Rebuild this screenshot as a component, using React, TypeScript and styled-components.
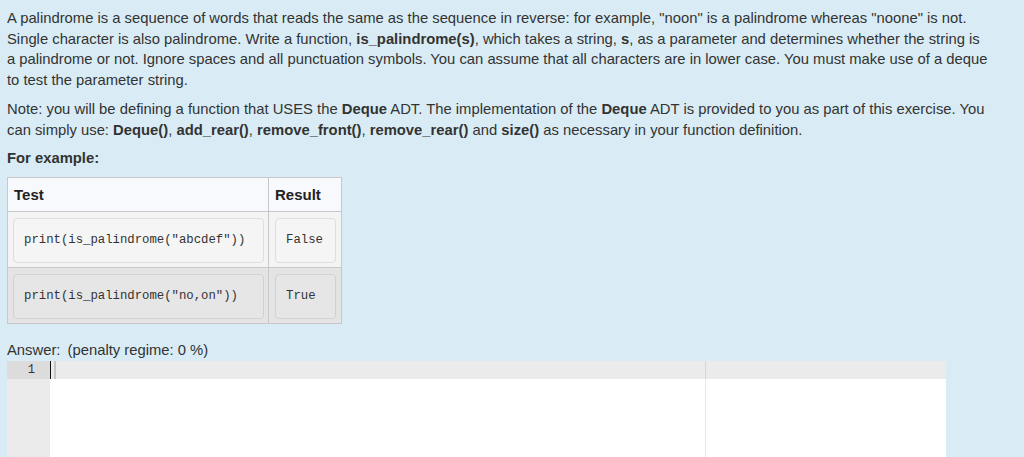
import React from "react";
import styled, { createGlobalStyle } from "styled-components";

const Global = createGlobalStyle`
  html, body {
    margin: 0;
    padding: 0;
    background: #d9ecf5;
    overflow: hidden;
  }
  body {
    font-family: "Liberation Sans", Arial, sans-serif;
    color: #333;
  }
`;

const Page = styled.div`
  padding: 8px 0 0 7px;
  height: 449px;
  overflow: hidden;
`;

const Formulation = styled.div`
  width: 983px;
  font-size: 14.8px;
  line-height: 20.7px;
`;

const Para = styled.p`
  margin: 0 0 8px;
`;

const Heading = styled.div`
  font-weight: bold;
  margin: 0 0 8px;
`;

const ExampleGrid = styled.div`
  display: grid;
  grid-template-columns: 261px 73px;
  width: 334px;
  border-left: 1px solid #c8c8c8;
  border-top: 1px solid #c8c8c8;
`;

const HeadCell = styled.div`
  background: #f8f9fc;
  border-right: 1px solid #c8c8c8;
  border-bottom: 1px solid #c8c8c8;
  padding: 6px 6px;
  font-weight: bold;
  font-size: 15px;
  line-height: 21px;
  color: #222;
`;

const BodyCell = styled.div<{ $shade: boolean; $wide: boolean }>`
  background: ${(p) => (p.$shade ? "#e4e4e4" : "#f4f4f4")};
  border-right: 1px solid #c8c8c8;
  border-bottom: 1px solid #c8c8c8;
  padding: ${(p) => (p.$wide ? "6px 4px 4px 5px" : "6px 5px 4px 6px")};
`;

const CodeBox = styled.pre<{ $shade: boolean }>`
  margin: 0;
  background: ${(p) => (p.$shade ? "#e6e6e6" : "#f5f5f5")};
  border: 1px solid ${(p) => (p.$shade ? "#d2d2d2" : "#dedede")};
  border-radius: 4px;
  padding: 12px 10px;
  font-family: "Liberation Mono", "DejaVu Sans Mono", monospace;
  font-size: 12.3px;
  line-height: 19px;
  color: #333;
  white-space: pre;
`;

const AnswerLine = styled.div`
  margin-top: 16px;
  font-size: 14.8px;
  line-height: 20.7px;
  color: #333;
`;

const Penalty = styled.span`
  margin-left: 3px;
`;

const Editor = styled.div`
  display: grid;
  grid-template-columns: 43px 1fr;
  width: 939px;
  height: 100px;
  background: #ffffff;
`;

const Gutter = styled.div`
  background: #ebebeb;
  font-family: "Liberation Mono", "DejaVu Sans Mono", monospace;
  font-size: 12px;
`;

const GutterCell = styled.div`
  height: 18px;
  line-height: 18px;
  background: #dcdcdc;
  text-align: right;
  padding-right: 15px;
  color: #333;
`;

const Content = styled.div`
  position: relative;
`;

const ActiveLine = styled.div`
  height: 18px;
  background: #ebebeb;
  display: flex;
  align-items: stretch;
`;

const Cursor = styled.div`
  width: 1px;
  background: #111;
`;

const Guide = styled.div`
  width: 2px;
  margin-left: 3px;
  background: #c4c4c4;
`;

const PrintMargin = styled.div`
  position: absolute;
  top: 0;
  bottom: 0;
  left: 655px;
  width: 1px;
  background: rgba(0, 0, 0, 0.09);
`;

const rows = [
  { test: 'print(is_palindrome("abcdef"))', result: "False" },
  { test: 'print(is_palindrome("no,on"))', result: "True" },
];

export default function App() {
  return (
    <>
      <Global />
      <Page>
        <Formulation>
          <Para>
            A palindrome is a sequence of words that reads the same as the sequence in reverse: for
            example, "noon" is a palindrome whereas "noone" is not. Single character is also
            palindrome. Write a function, <b>is_palindrome(s)</b>, which takes a string, <b>s</b>, as
            a parameter and determines whether the string is a palindrome or not. Ignore spaces and
            all punctuation symbols. You can assume that all characters are in lower case. You must
            make use of a deque to test the parameter string.
          </Para>
          <Para>
            Note: you will be defining a function that USES the <b>Deque</b> ADT. The implementation
            of the <b>Deque</b> ADT is provided to you as part of this exercise. You can simply use:{" "}
            <b>Deque()</b>, <b>add_rear()</b>, <b>remove_front()</b>, <b>remove_rear()</b> and{" "}
            <b>size()</b> as necessary in your function definition.
          </Para>
          <Heading>For example:</Heading>
          <ExampleGrid>
            <HeadCell>Test</HeadCell>
            <HeadCell>Result</HeadCell>
            {rows.map((r, i) => (
              <React.Fragment key={i}>
                <BodyCell $shade={i % 2 === 1} $wide={true}>
                  <CodeBox $shade={i % 2 === 1}>{r.test}</CodeBox>
                </BodyCell>
                <BodyCell $shade={i % 2 === 1} $wide={false}>
                  <CodeBox $shade={i % 2 === 1}>{r.result}</CodeBox>
                </BodyCell>
              </React.Fragment>
            ))}
          </ExampleGrid>
        </Formulation>
        <AnswerLine>
          Answer: <Penalty>(penalty regime: 0 %)</Penalty>
        </AnswerLine>
        <Editor>
          <Gutter>
            <GutterCell>1</GutterCell>
          </Gutter>
          <Content>
            <ActiveLine>
              <Cursor />
              <Guide />
            </ActiveLine>
            <PrintMargin />
          </Content>
        </Editor>
      </Page>
    </>
  );
}
